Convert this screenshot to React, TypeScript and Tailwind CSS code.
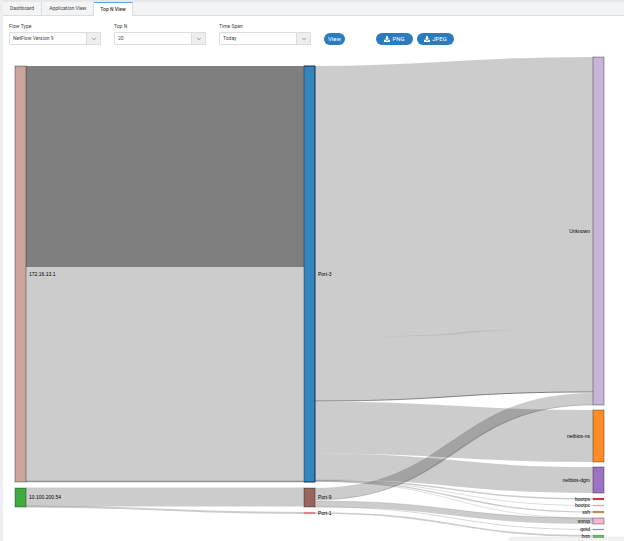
import React from 'react';
import { ChevronDown } from 'lucide-react';

interface SankeyNode {
  name: string;
  x: number;
  y: number;
  height: number;
  color: string;
  labelLeft?: boolean;
}

interface SankeyLink {
  from: [number, number];
  to: [number, number];
  width: number;
  opacity?: number;
}

const NODE_WIDTH = 11;
const LEFT = 12;
const MIDDLE = 301;
const RIGHT = 590;

const nodes: SankeyNode[] = [
  { name: '172.16.13.1', x: LEFT, y: 15, height: 416, color: '#cba59d' },
  { name: '10.100.200.54', x: LEFT, y: 437, height: 19, color: '#41ab41' },
  { name: 'Port-3', x: MIDDLE, y: 15, height: 416, color: '#3584bb' },
  { name: 'Port-9', x: MIDDLE, y: 437, height: 19, color: '#98665c' },
  { name: 'Port-1', x: MIDDLE, y: 461, height: 2, color: '#e79090' },
  { name: 'Unknown', x: RIGHT, y: 6, height: 348, color: '#c9b4d9', labelLeft: true },
  { name: 'netbios-ns', x: RIGHT, y: 359, height: 52, color: '#ff8c26', labelLeft: true },
  { name: 'netbios-dgm', x: RIGHT, y: 416, height: 26, color: '#9d72c2', labelLeft: true },
  { name: 'bootps', x: RIGHT, y: 447, height: 2, color: '#cf4040', labelLeft: true },
  { name: 'bootpc', x: RIGHT, y: 454, height: 1, color: '#e0c4d2', labelLeft: true },
  { name: 'ssh', x: RIGHT, y: 460, height: 2, color: '#c99560', labelLeft: true },
  { name: 'snmp', x: RIGHT, y: 467, height: 6, color: '#f7b9d5', labelLeft: true },
  { name: 'qotd', x: RIGHT, y: 478, height: 1, color: '#98a5b8', labelLeft: true },
  { name: 'bgp', x: RIGHT, y: 484, height: 3, color: '#72b566', labelLeft: true },
];

// from/to are the centre of the band at each end
const links: SankeyLink[] = [
  { from: [LEFT, 115.5], to: [MIDDLE, 115.5], width: 201, opacity: 0.5 },
  { from: [LEFT, 323.5], to: [MIDDLE, 323.5], width: 215 },
  { from: [LEFT, 430.5], to: [MIDDLE, 430.5], width: 1.5, opacity: 0.3 },
  { from: [LEFT, 446], to: [MIDDLE, 446], width: 19 },
  { from: [LEFT, 455.5], to: [MIDDLE, 462], width: 2 },
  { from: [MIDDLE, 182.5], to: [RIGHT, 173.5], width: 335 },
  { from: [MIDDLE, 350], to: [RIGHT, 341], width: 1, opacity: 0.4 },
  { from: [MIDDLE, 376.5], to: [RIGHT, 385], width: 52 },
  { from: [MIDDLE, 415.5], to: [RIGHT, 429], width: 26 },
  { from: [MIDDLE, 429], to: [RIGHT, 448], width: 1.5 },
  { from: [MIDDLE, 429.5], to: [RIGHT, 454.5], width: 0.7 },
  { from: [MIDDLE, 430], to: [RIGHT, 461], width: 1.3 },
  { from: [MIDDLE, 430.5], to: [RIGHT, 467], width: 0.6 },
  { from: [MIDDLE, 443], to: [RIGHT, 348], width: 12 },
  { from: [MIDDLE, 449], to: [RIGHT, 354], width: 0.8 },
  { from: [MIDDLE, 450], to: [RIGHT, 467], width: 0.6 },
  { from: [MIDDLE, 453], to: [RIGHT, 470], width: 6 },
  { from: [MIDDLE, 456], to: [RIGHT, 478.5], width: 0.8 },
  { from: [MIDDLE, 462], to: [RIGHT, 485], width: 1.6 },
];

const linkPath = ({ from, to }: SankeyLink) => {
  const x0 = from[0] + NODE_WIDTH;
  const mid = (x0 + to[0]) / 2;
  return `M${x0},${from[1]}C${mid},${from[1]} ${mid},${to[1]} ${to[0]},${to[1]}`;
};

const DownloadIcon = () => (
  <svg viewBox="0 0 14 14" className="h-[6px] w-[6px]" fill="currentColor" aria-hidden="true">
    <path d="M5 0h4v5h3L7 10 2 5h3ZM0 9h4l3 3 3-3h4v5H0Z" />
  </svg>
);

const SankeyChart = () => (
  <svg viewBox="0 0 621 490" className="block w-full" role="img" aria-label="Top N flows">
    <g fill="none" stroke="#000">
      {links.map((link, i) => (
        <path key={i} d={linkPath(link)} strokeWidth={link.width} strokeOpacity={link.opacity ?? 0.2} />
      ))}
    </g>
    {/* faint crease inside the widest flow */}
    <path d="M375 285.5Q440 284 456 281.5T515 279Q470 281 456 283T375 285.5Z" fill="#000" fillOpacity="0.07" />
    {nodes.map((node) => (
      <g key={node.name}>
        <rect
          x={node.x}
          y={node.y}
          width={NODE_WIDTH}
          height={node.height}
          fill={node.color}
          stroke="#000"
          strokeOpacity={node.height > 3 ? 0.35 : 0.2}
          strokeWidth={node.height > 3 ? 1 : 0.5}
        />
        <text
          x={node.labelLeft ? node.x - 3 : node.x + NODE_WIDTH + 3}
          y={node.y + node.height / 2}
          dy="0.35em"
          textAnchor={node.labelLeft ? 'end' : 'start'}
          className="fill-black font-['Liberation_Sans',sans-serif] text-[5px]"
        >
          {node.name}
        </text>
      </g>
    ))}
    <path d="M301 15H312V431H301" fill="none" stroke="#123a58" strokeWidth="0.8" />
  </svg>
);

interface SelectFieldProps {
  id: string;
  label: string;
  options: string[];
}

const SelectField = ({ id, label, options }: SelectFieldProps) => (
  <div className="w-[92px]">
    <label htmlFor={id} className="block h-[10px] text-[5px] leading-[8px] text-[#444]">
      {label}
    </label>
    <div className="relative">
      <select
        id={id}
        className="block h-[13px] w-full appearance-none rounded-[1px] border border-[#ddd] bg-white pl-[3px] text-[5px] leading-[11px] text-[#444]"
      >
        {options.map((option) => (
          <option key={option}>{option}</option>
        ))}
      </select>
      <span className="pointer-events-none absolute inset-y-0 right-0 flex w-[15px] items-center justify-center border border-[#ddd] bg-[#eee] text-[#777]">
        <ChevronDown size={6} strokeWidth={3} />
      </span>
    </div>
  </div>
);

const tabs = ['Dashboard', 'Application View', 'Top N View'];

const App = () => {
  return (
    <div className="min-h-screen overflow-hidden border-l-3 border-[#eee] bg-white font-[Roboto,sans-serif]">
      {/* Tabs */}
      <nav className="flex h-4 border-t-2 border-b border-t-[#e8e8ea] border-b-[#ddd] bg-[#f3f4f6] text-[5px] leading-[12px]">
        {tabs.map((tab) => (
          <a
            key={tab}
            href="#"
            className={
              tab === 'Top N View'
                ? 'h-[14px] border-t border-r border-t-[#5ba3d9] border-r-[#ddd] bg-white px-[6px] font-medium text-[#333]'
                : 'border-r border-[#ddd] px-[7px] text-[#444]'
            }
          >
            {tab}
          </a>
        ))}
      </nav>

      {/* Filters */}
      <div className="flex h-[35px] items-start gap-[13px] pt-[6px] pl-[6px]">
        <SelectField id="flow-type" label="Flow Type" options={['NetFlow Version 9']} />
        <SelectField id="top-n" label="Top N" options={['20']} />
        <SelectField id="time-span" label="Time Span" options={['Today']} />
        <button className="mt-[11px] h-3 w-[21px] rounded-full bg-[#2b7bbf] text-[6px] leading-[12px] text-white">
          View
        </button>
        <div className="mt-[11px] ml-[18px] flex gap-1">
          {['PNG', 'JPEG'].map((format) => (
            <button
              key={format}
              className="flex h-3 w-[37px] items-center justify-center gap-[2px] rounded-full bg-[#2b7bbf] text-[6px] leading-[12px] text-white"
            >
              <DownloadIcon />
              {format}
            </button>
          ))}
        </div>
      </div>

      <SankeyChart />

      {/* Top edge of the status bar */}
      <div className="fixed right-0 bottom-0 h-[3px] w-[114px] rounded-tl-sm bg-[#f2f2f2] shadow-[0_0_2px_#bbb]" />
    </div>
  );
};

export default App;
